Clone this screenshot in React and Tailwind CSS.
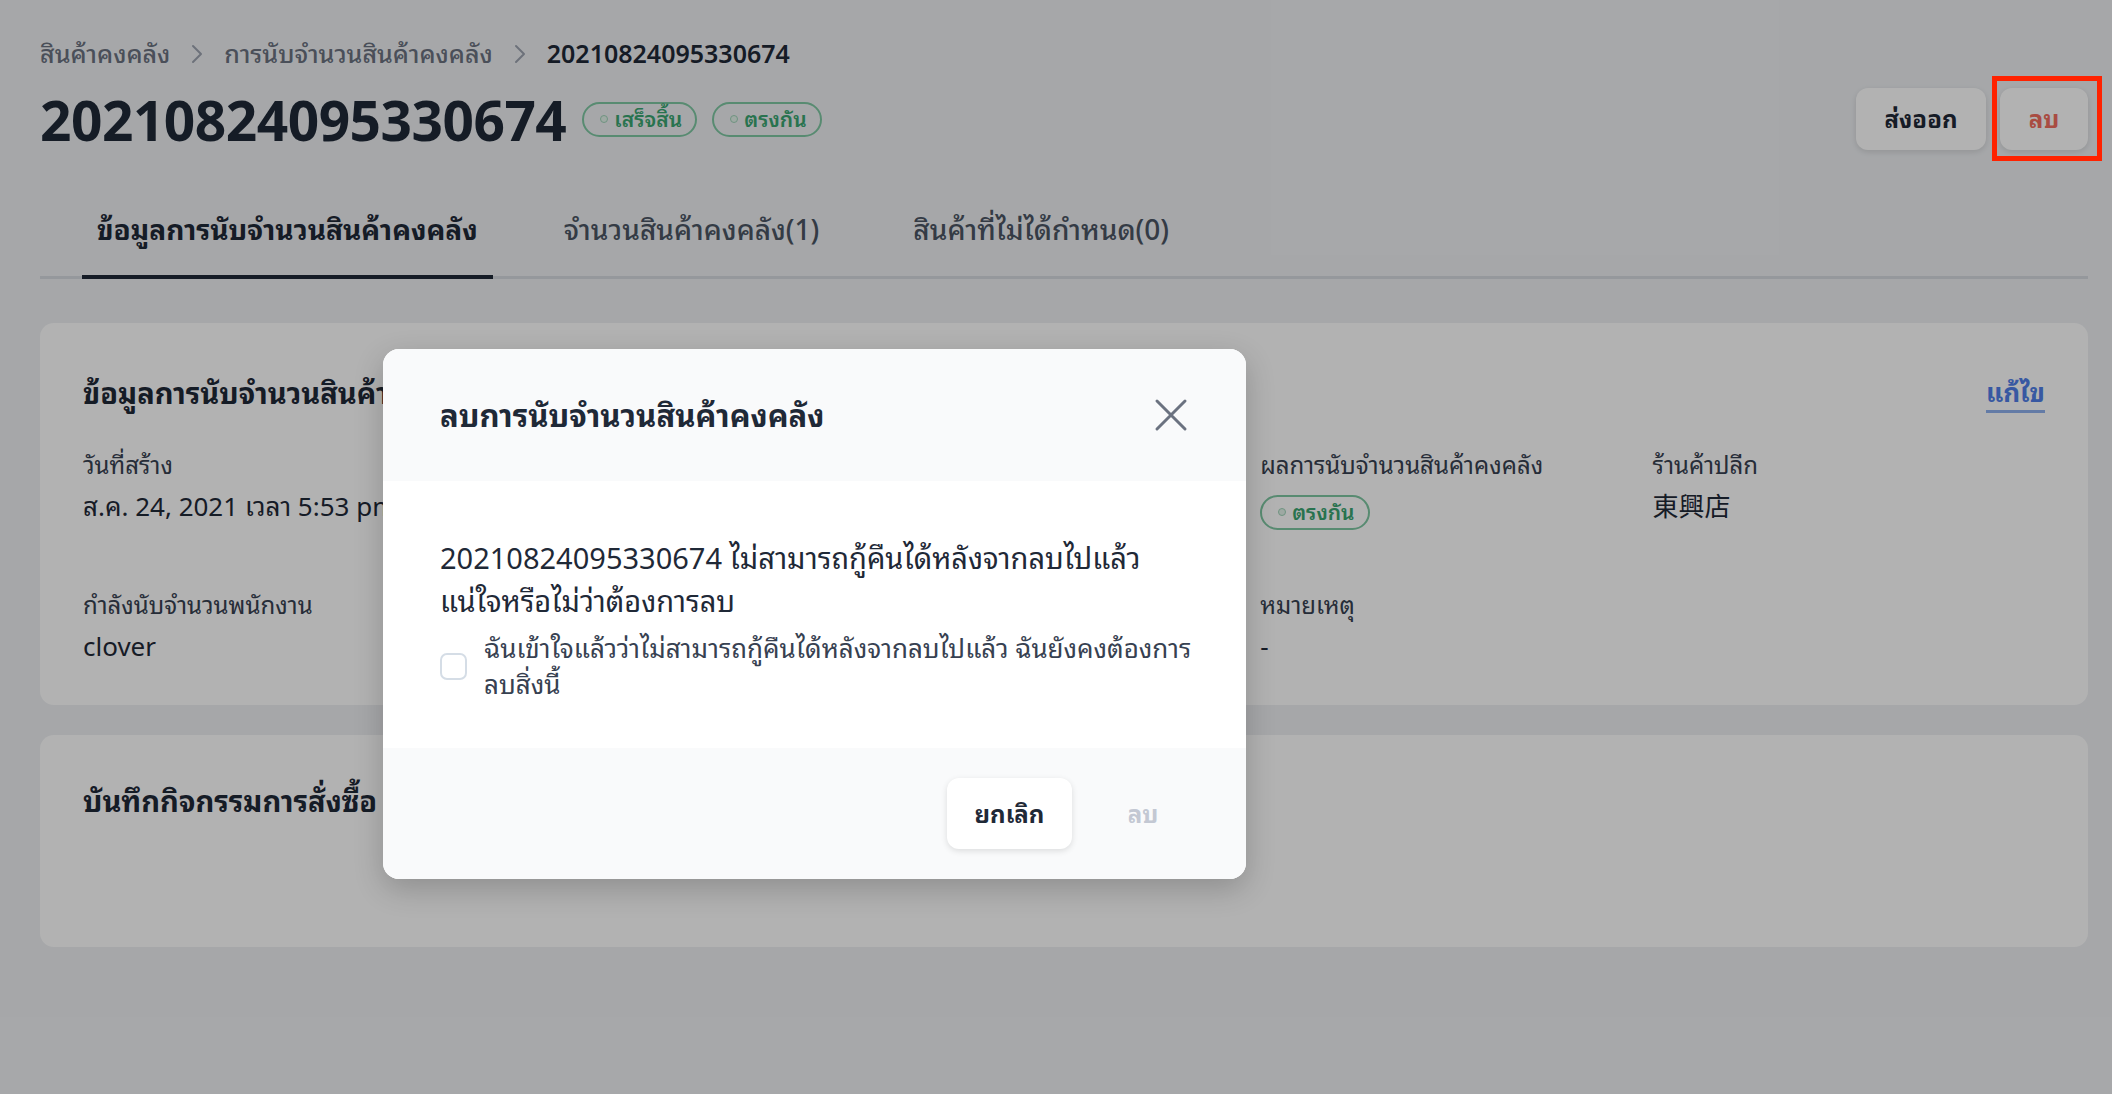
import React from "react";

const F = { fontFamily: '"Noto Sans", "Noto Sans Thai Looped", "Noto Sans Thai", "Noto Sans CJK SC", sans-serif' };

function Badge({ children }) {
  return (
    <span className="inline-flex items-center gap-[6px] h-[35px] pl-[16px] pr-[13px] rounded-full border-2 border-[#7fc7a3] text-[#3aa571] text-[21px] font-semibold leading-none">
      <span className="w-[8px] h-[8px] rounded-full border border-[#9fd3b8] bg-[#e2f3ea]" />
      {children}
    </span>
  );
}

function Chevron() {
  return (
    <svg width="14" height="22" viewBox="0 0 14 22" fill="none" className="mx-[20px]">
      <path d="M3 3l8 8-8 8" stroke="#9ca3af" strokeWidth="2" strokeLinecap="round" strokeLinejoin="round" />
    </svg>
  );
}

function Field({ label, children }) {
  return (
    <div className="flex flex-col">
      <div className="text-[24px] leading-[34px] text-[#374151]">{label}</div>
      <div className="mt-[6px] text-[26px] leading-[36px] text-[#1f2937]">{children}</div>
    </div>
  );
}

export default function App() {
  return (
    <div style={F} className="relative w-[2112px] h-[1094px] overflow-hidden bg-[#eef0f3]">
      <div className="pl-[40px] pr-[24px] pt-[34px]">
        {/* breadcrumb */}
        <div className="flex items-center h-[40px] text-[25px] font-medium text-[#6b7280]">
          <span>สินค้าคงคลัง</span>
          <Chevron />
          <span>การนับจำนวนสินค้าคงคลัง</span>
          <Chevron />
          <span className="text-[#1f2937] font-semibold">20210824095330674</span>
        </div>
        {/* title row */}
        <div className="flex items-center justify-between mt-[9px] h-[72px]">
          <div className="flex items-center">
            <h1 className="text-[55px] font-bold text-[#1f2937] leading-none tracking-[-0.5px]">20210824095330674</h1>
            <div className="flex items-center gap-[15px] ml-[16px]">
              <Badge>เสร็จสิ้น</Badge>
              <Badge>ตรงกัน</Badge>
            </div>
          </div>
          <div className="flex items-center gap-[14px]">
            <button className="h-[62px] w-[130px] rounded-[12px] bg-white shadow-[0_2px_6px_rgba(0,0,0,0.12)] text-[24px] font-bold text-[#1f2937]">ส่งออก</button>
            <button className="h-[62px] w-[88px] rounded-[12px] bg-white shadow-[0_2px_6px_rgba(0,0,0,0.12)] text-[24px] font-bold text-[#f26d5f]">ลบ</button>
          </div>
        </div>
        {/* tabs */}
        <div className="mt-[54px] flex border-b-[3px] border-[#d6dae0]">
          <div className="ml-[42px] px-[15px] pb-[26px] border-b-[4px] border-[#1f2937] -mb-[3px] text-[28px] font-bold text-[#1f2937] leading-[40px]">ข้อมูลการนับจำนวนสินค้าคงคลัง</div>
          <div className="ml-[56px] px-[15px] pb-[26px] text-[28px] font-medium text-[#4b5563] leading-[40px]">จำนวนสินค้าคงคลัง(1)</div>
          <div className="ml-[64px] px-[15px] pb-[26px] text-[28px] font-medium text-[#4b5563] leading-[40px]">สินค้าที่ไม่ได้กำหนด(0)</div>
        </div>
        {/* card 1 */}
        <div className="mt-[44px] h-[382px] rounded-[14px] bg-white px-[43px] pt-[49px]">
          <div className="flex items-center justify-between h-[42px]">
            <h2 className="text-[29px] font-bold text-[#1f2937] leading-[42px]">ข้อมูลการนับจำนวนสินค้าคงคลัง</h2>
            <a className="text-[26px] font-bold text-[#4f7fe8] leading-[36px] border-b-[3px] border-[#8fb0ee]">แก้ไข</a>
          </div>
          <div className="mt-[34px] grid grid-cols-5 gap-y-[58px]">
            <Field label="วันที่สร้าง">ส.ค. 24, 2021 เวลา 5:53 pm</Field>
            <div />
            <div />
            <Field label="ผลการนับจำนวนสินค้าคงคลัง">
              <span className="inline-flex items-center gap-[6px] h-[35px] pl-[16px] pr-[13px] rounded-full border-2 border-[#7fc7a3] text-[#3aa571] text-[21px] font-semibold leading-none">
                <span className="w-[8px] h-[8px] rounded-full border border-[#9fd3b8] bg-[#e2f3ea]" />
                ตรงกัน
              </span>
            </Field>
            <Field label="ร้านค้าปลีก">東興店</Field>
            <Field label="กำลังนับจำนวนพนักงาน">clover</Field>
            <div />
            <div />
            <Field label="หมายเหตุ">-</Field>
            <div />
          </div>
        </div>
        {/* card 2 */}
        <div className="mt-[30px] h-[212px] rounded-[14px] bg-white px-[43px] pt-[45px]">
          <h2 className="text-[29px] font-bold text-[#1f2937] leading-[42px]">บันทึกกิจกรรมการสั่งซื้อ</h2>
        </div>
      </div>

      {/* overlay */}
      <div className="absolute inset-0 bg-black/30" />

      {/* annotation */}
      <div className="absolute left-[1992px] top-[76px] w-[110px] h-[85px] border-[5px] border-[#ff2200]" />

      {/* modal */}
      <div className="absolute left-[383px] top-[349px] w-[863px] rounded-[16px] overflow-hidden bg-white shadow-[0_10px_30px_rgba(0,0,0,0.2)]">
        <div className="h-[132px] bg-[#f9fafb] flex items-center justify-between pl-[57px] pr-[58px]">
          <h3 className="text-[31px] font-bold text-[#1f2937]">ลบการนับจำนวนสินค้าคงคลัง</h3>
          <svg width="34" height="34" viewBox="0 0 34 34" fill="none">
            <path d="M3 3l28 28M31 3L3 31" stroke="#6b7280" strokeWidth="3" strokeLinecap="round" />
          </svg>
        </div>
        <div className="h-[267px] bg-white pl-[57px] pr-[52px] pt-[55px]">
          <p className="text-[29px] leading-[43px] text-[#1f2937]">20210824095330674 ไม่สามารถกู้คืนได้หลังจากลบไปแล้ว<br />แน่ใจหรือไม่ว่าต้องการลบ</p>
          <label className="mt-[8px] flex items-center gap-[17px]">
            <span className="shrink-0 w-[27px] h-[27px] rounded-[7px] border-2 border-[#d5dde6] bg-white" />
            <span className="text-[26px] leading-[36px] text-[#374151]">ฉันเข้าใจแล้วว่าไม่สามารถกู้คืนได้หลังจากลบไปแล้ว ฉันยังคงต้องการลบสิ่งนี้</span>
          </label>
        </div>
        <div className="h-[131px] bg-[#f9fafb] flex items-center justify-end pr-[48px] gap-[16px]">
          <button className="h-[71px] w-[125px] rounded-[12px] bg-white shadow-[0_2px_6px_rgba(0,0,0,0.12)] text-[24px] font-bold text-[#1f2937]">ยกเลิก</button>
          <button className="h-[71px] w-[110px] text-[24px] font-bold text-[#c3c8d3]">ลบ</button>
        </div>
      </div>
    </div>
  );
}
